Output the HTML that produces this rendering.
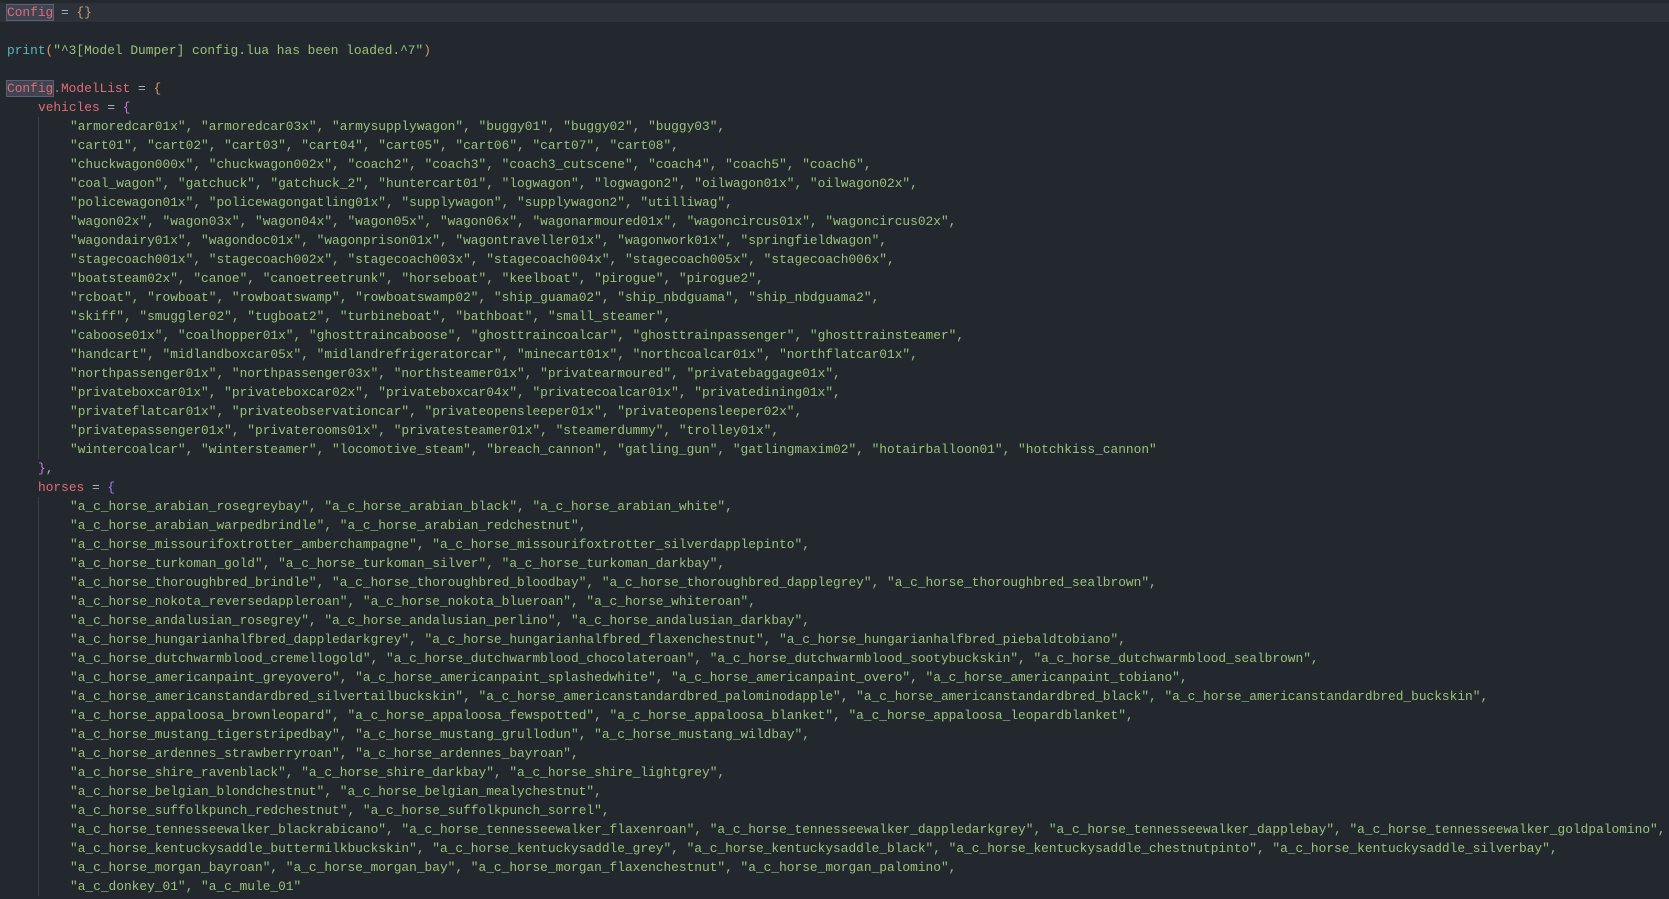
<!DOCTYPE html>
<html><head><meta charset="utf-8"><style>
html,body{margin:0;padding:0;background:#23272e;width:1669px;height:899px;overflow:hidden}
pre{margin:0;padding:3px 0 0 7px;font-family:"Liberation Mono",monospace;font-size:12.85px;line-height:19px;color:#abb2bf;position:relative}
.hl{position:absolute;left:0;top:3px;width:1669px;height:19px;background:#2c313a}
.l{position:relative;white-space:pre;height:19px}
.s{color:#98c379}.r{color:#e06c75}.o{color:#d19a66}.p{color:#c678dd}.b{color:#a07cf0}.c{color:#56b6c2}
.i1{padding-left:31px}.i2{padding-left:63px}
.box{background:#3e4451;outline:1px solid #5a6170}
.g{position:absolute;left:38px;width:1px;background:#3b4048}
</style></head><body><pre><div class="hl"></div><div class="g" style="top:117px;height:342px"></div><div class="g" style="top:497px;height:399px"></div><div class="l"><span class="r box">Config</span> = <span class="o">{}</span></div><div class="l"> </div><div class="l"><span class="c">print</span><span class="o">(</span><span class="s">"^3[Model Dumper] config.lua has been loaded.^7"</span><span class="o">)</span></div><div class="l"> </div><div class="l"><span class="r box">Config</span><span class="r">.ModelList</span> = <span class="o">{</span></div><div class="l i1"><span class="r">vehicles</span> = <span class="p">{</span></div><div class="l s i2">"armoredcar01x", "armoredcar03x", "armysupplywagon", "buggy01", "buggy02", "buggy03",</div><div class="l s i2">"cart01", "cart02", "cart03", "cart04", "cart05", "cart06", "cart07", "cart08",</div><div class="l s i2">"chuckwagon000x", "chuckwagon002x", "coach2", "coach3", "coach3_cutscene", "coach4", "coach5", "coach6",</div><div class="l s i2">"coal_wagon", "gatchuck", "gatchuck_2", "huntercart01", "logwagon", "logwagon2", "oilwagon01x", "oilwagon02x",</div><div class="l s i2">"policewagon01x", "policewagongatling01x", "supplywagon", "supplywagon2", "utilliwag",</div><div class="l s i2">"wagon02x", "wagon03x", "wagon04x", "wagon05x", "wagon06x", "wagonarmoured01x", "wagoncircus01x", "wagoncircus02x",</div><div class="l s i2">"wagondairy01x", "wagondoc01x", "wagonprison01x", "wagontraveller01x", "wagonwork01x", "springfieldwagon",</div><div class="l s i2">"stagecoach001x", "stagecoach002x", "stagecoach003x", "stagecoach004x", "stagecoach005x", "stagecoach006x",</div><div class="l s i2">"boatsteam02x", "canoe", "canoetreetrunk", "horseboat", "keelboat", "pirogue", "pirogue2",</div><div class="l s i2">"rcboat", "rowboat", "rowboatswamp", "rowboatswamp02", "ship_guama02", "ship_nbdguama", "ship_nbdguama2",</div><div class="l s i2">"skiff", "smuggler02", "tugboat2", "turbineboat", "bathboat", "small_steamer",</div><div class="l s i2">"caboose01x", "coalhopper01x", "ghosttraincaboose", "ghosttraincoalcar", "ghosttrainpassenger", "ghosttrainsteamer",</div><div class="l s i2">"handcart", "midlandboxcar05x", "midlandrefrigeratorcar", "minecart01x", "northcoalcar01x", "northflatcar01x",</div><div class="l s i2">"northpassenger01x", "northpassenger03x", "northsteamer01x", "privatearmoured", "privatebaggage01x",</div><div class="l s i2">"privateboxcar01x", "privateboxcar02x", "privateboxcar04x", "privatecoalcar01x", "privatedining01x",</div><div class="l s i2">"privateflatcar01x", "privateobservationcar", "privateopensleeper01x", "privateopensleeper02x",</div><div class="l s i2">"privatepassenger01x", "privaterooms01x", "privatesteamer01x", "steamerdummy", "trolley01x",</div><div class="l s i2">"wintercoalcar", "wintersteamer", "locomotive_steam", "breach_cannon", "gatling_gun", "gatlingmaxim02", "hotairballoon01", "hotchkiss_cannon"</div><div class="l i1"><span class="p">}</span>,</div><div class="l i1"><span class="r">horses</span> = <span class="b">{</span></div><div class="l s i2">"a_c_horse_arabian_rosegreybay", "a_c_horse_arabian_black", "a_c_horse_arabian_white",</div><div class="l s i2">"a_c_horse_arabian_warpedbrindle", "a_c_horse_arabian_redchestnut",</div><div class="l s i2">"a_c_horse_missourifoxtrotter_amberchampagne", "a_c_horse_missourifoxtrotter_silverdapplepinto",</div><div class="l s i2">"a_c_horse_turkoman_gold", "a_c_horse_turkoman_silver", "a_c_horse_turkoman_darkbay",</div><div class="l s i2">"a_c_horse_thoroughbred_brindle", "a_c_horse_thoroughbred_bloodbay", "a_c_horse_thoroughbred_dapplegrey", "a_c_horse_thoroughbred_sealbrown",</div><div class="l s i2">"a_c_horse_nokota_reversedappleroan", "a_c_horse_nokota_blueroan", "a_c_horse_whiteroan",</div><div class="l s i2">"a_c_horse_andalusian_rosegrey", "a_c_horse_andalusian_perlino", "a_c_horse_andalusian_darkbay",</div><div class="l s i2">"a_c_horse_hungarianhalfbred_dappledarkgrey", "a_c_horse_hungarianhalfbred_flaxenchestnut", "a_c_horse_hungarianhalfbred_piebaldtobiano",</div><div class="l s i2">"a_c_horse_dutchwarmblood_cremellogold", "a_c_horse_dutchwarmblood_chocolateroan", "a_c_horse_dutchwarmblood_sootybuckskin", "a_c_horse_dutchwarmblood_sealbrown",</div><div class="l s i2">"a_c_horse_americanpaint_greyovero", "a_c_horse_americanpaint_splashedwhite", "a_c_horse_americanpaint_overo", "a_c_horse_americanpaint_tobiano",</div><div class="l s i2">"a_c_horse_americanstandardbred_silvertailbuckskin", "a_c_horse_americanstandardbred_palominodapple", "a_c_horse_americanstandardbred_black", "a_c_horse_americanstandardbred_buckskin",</div><div class="l s i2">"a_c_horse_appaloosa_brownleopard", "a_c_horse_appaloosa_fewspotted", "a_c_horse_appaloosa_blanket", "a_c_horse_appaloosa_leopardblanket",</div><div class="l s i2">"a_c_horse_mustang_tigerstripedbay", "a_c_horse_mustang_grullodun", "a_c_horse_mustang_wildbay",</div><div class="l s i2">"a_c_horse_ardennes_strawberryroan", "a_c_horse_ardennes_bayroan",</div><div class="l s i2">"a_c_horse_shire_ravenblack", "a_c_horse_shire_darkbay", "a_c_horse_shire_lightgrey",</div><div class="l s i2">"a_c_horse_belgian_blondchestnut", "a_c_horse_belgian_mealychestnut",</div><div class="l s i2">"a_c_horse_suffolkpunch_redchestnut", "a_c_horse_suffolkpunch_sorrel",</div><div class="l s i2">"a_c_horse_tennesseewalker_blackrabicano", "a_c_horse_tennesseewalker_flaxenroan", "a_c_horse_tennesseewalker_dappledarkgrey", "a_c_horse_tennesseewalker_dapplebay", "a_c_horse_tennesseewalker_goldpalomino",</div><div class="l s i2">"a_c_horse_kentuckysaddle_buttermilkbuckskin", "a_c_horse_kentuckysaddle_grey", "a_c_horse_kentuckysaddle_black", "a_c_horse_kentuckysaddle_chestnutpinto", "a_c_horse_kentuckysaddle_silverbay",</div><div class="l s i2">"a_c_horse_morgan_bayroan", "a_c_horse_morgan_bay", "a_c_horse_morgan_flaxenchestnut", "a_c_horse_morgan_palomino",</div><div class="l s i2">"a_c_donkey_01", "a_c_mule_01"</div></pre></body></html>
